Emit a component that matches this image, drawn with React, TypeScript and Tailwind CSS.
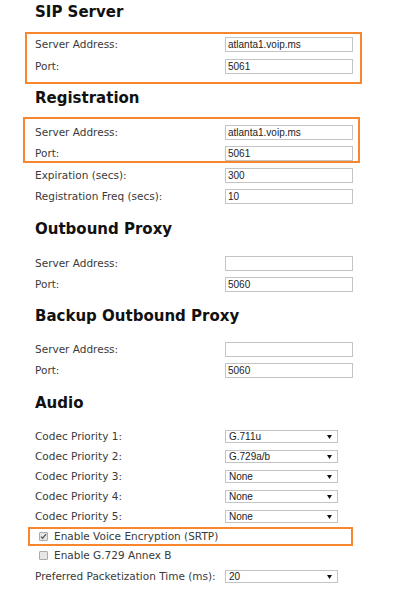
import React from "react";

const LABEL = "w-[190px] shrink-0 text-[10.5px] leading-[15px] text-[#3a3a3a] whitespace-nowrap";

function Heading({ title, mt }: { title: string; mt: string }) {
  return (
    <h2 className={`${mt} pl-[35px] text-[15px] font-bold leading-[18px] text-[#111]`}>
      {title}
    </h2>
  );
}

function Field({ label, value, mt = "" }: { label: string; value: string; mt?: string }) {
  return (
    <div className={`${mt} flex items-center h-[15px]`}>
      <span className={LABEL}>{label}</span>
      <input
        readOnly
        defaultValue={value}
        className="w-[128px] h-[15px] border border-[#c4c4c4] bg-white px-[2px] text-[10px] text-[#222] outline-none"
        style={{ fontFamily: '"Liberation Sans", Arial, sans-serif' }}
      />
    </div>
  );
}

function Select({ label, value, mt = "" }: { label: string; value: string; mt?: string }) {
  return (
    <div className={`${mt} flex items-center h-[13px]`}>
      <span className={LABEL}>{label}</span>
      <div
        className="w-[113px] h-[13px] border border-[#c4c4c4] bg-white flex items-center justify-between pl-[3px] pr-[5px] text-[10px] leading-none text-[#222]"
        style={{ fontFamily: '"Liberation Sans", Arial, sans-serif' }}
      >
        <span>{value}</span>
        <svg width="5" height="4" viewBox="0 0 5 4">
          <path d="M0 0h5L2.5 4z" fill="#111" />
        </svg>
      </div>
    </div>
  );
}

function Check({ checked }: { checked?: boolean }) {
  return (
    <span className="w-[9px] h-[9px] shrink-0 border border-[#ababab] bg-[#e6e6e6] rounded-[1px] flex items-center justify-center">
      {checked && (
        <svg width="7" height="7" viewBox="0 0 7 7">
          <path d="M1 3.6l1.6 1.7L6 1.2" stroke="#555" strokeWidth="1.3" fill="none" />
        </svg>
      )}
    </span>
  );
}

export default function App() {
  return (
    <div
      className="w-[393px] h-[599px] overflow-hidden bg-white pt-[3px]"
      style={{ fontFamily: '"DejaVu Sans", Verdana, sans-serif' }}
    >
      <Heading title="SIP Server" mt="" />
      <div className="mt-[11px] ml-[25px] w-[337px] border-2 border-[#f7862e] pl-[8px] pt-[3px] pb-[8px]">
        <Field label="Server Address:" value="atlanta1.voip.ms" />
        <Field label="Port:" value="5061" mt="mt-[7px]" />
      </div>

      <Heading title="Registration" mt="mt-[5px]" />
      <div className="mt-[10px] ml-[23px] w-[337px] border-2 border-[#f7862e] pl-[10px] pt-[6px]">
        <Field label="Server Address:" value="atlanta1.voip.ms" />
        <Field label="Port:" value="5061" mt="mt-[6px]" />
      </div>
      <div className="pl-[35px]">
        <Field label="Expiration (secs):" value="300" mt="mt-[5px]" />
        <Field label="Registration Freq (secs):" value="10" mt="mt-[6px]" />
      </div>

      <Heading title="Outbound Proxy" mt="mt-[16px]" />
      <div className="pl-[35px]">
        <Field label="Server Address:" value="" mt="mt-[18px]" />
        <Field label="Port:" value="5060" mt="mt-[6px]" />
      </div>

      <Heading title="Backup Outbound Proxy" mt="mt-[15px]" />
      <div className="pl-[35px]">
        <Field label="Server Address:" value="" mt="mt-[17px]" />
        <Field label="Port:" value="5060" mt="mt-[6px]" />
      </div>

      <Heading title="Audio" mt="mt-[16px]" />
      <div className="pl-[35px]">
        <Select label="Codec Priority 1:" value="G.711u" mt="mt-[18px]" />
        <Select label="Codec Priority 2:" value="G.729a/b" mt="mt-[7px]" />
        <Select label="Codec Priority 3:" value="None" mt="mt-[7px]" />
        <Select label="Codec Priority 4:" value="None" mt="mt-[7px]" />
        <Select label="Codec Priority 5:" value="None" mt="mt-[7px]" />
      </div>

      <div className="mt-[4px] ml-[28px] w-[325px] h-[19px] border-2 border-[#f7862e] pl-[9px] flex items-center gap-[6px]">
        <Check checked />
        <span className="text-[10.5px] leading-[15px] text-[#3a3a3a]">Enable Voice Encryption (SRTP)</span>
      </div>
      <div className="mt-[2px] pl-[39px] h-[15px] flex items-center gap-[6px]">
        <Check />
        <span className="text-[10.5px] leading-[15px] text-[#3a3a3a]">Enable G.729 Annex B</span>
      </div>
      <div className="pl-[35px]">
        <Select label="Preferred Packetization Time (ms):" value="20" mt="mt-[7px]" />
      </div>
    </div>
  );
}
